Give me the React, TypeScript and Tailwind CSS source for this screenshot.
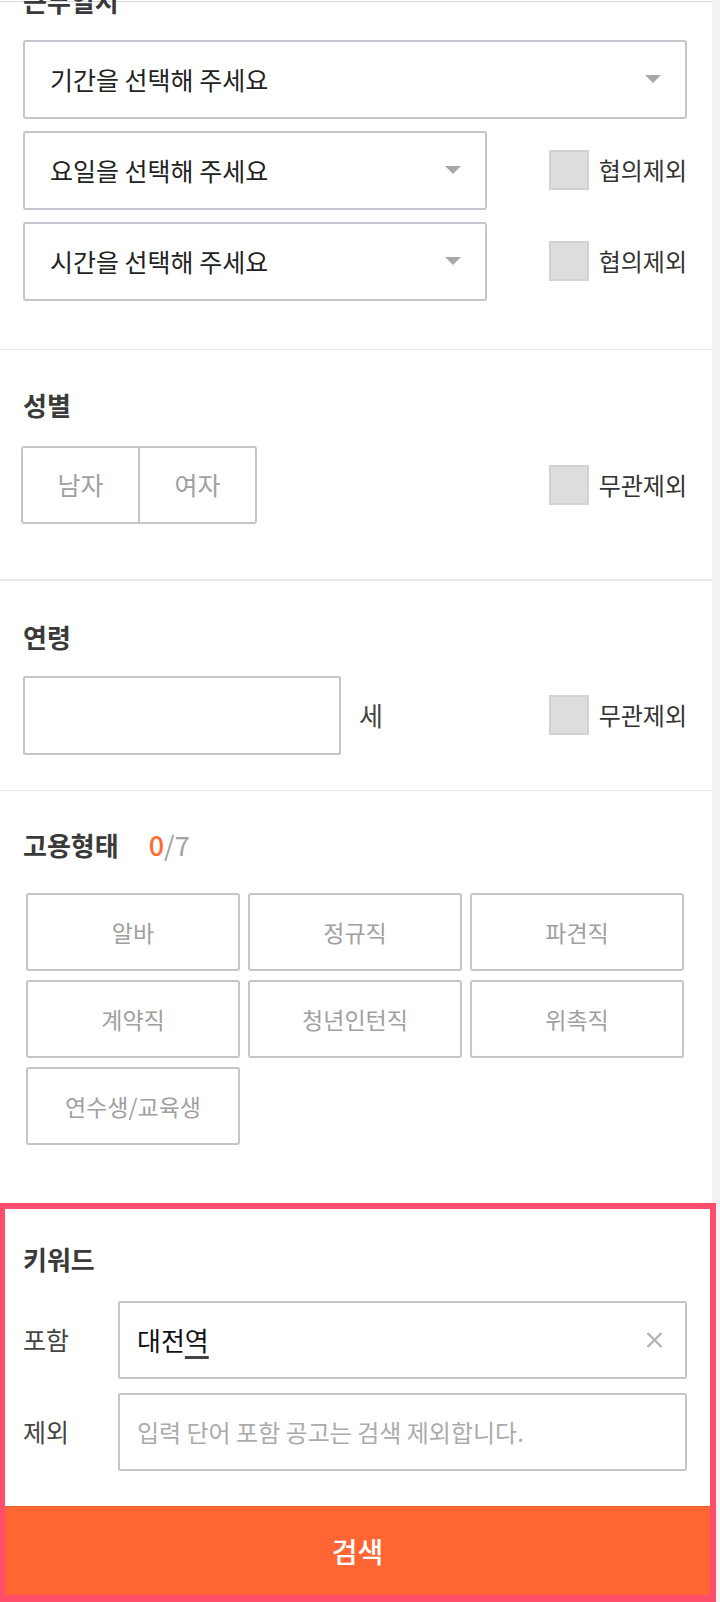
const font = "font-['Noto_Sans_CJK_KR','Noto_Sans',sans-serif]";

function Arrow() {
  return (
    <svg width="16" height="8" viewBox="0 0 16 8" className="shrink-0">
      <path d="M0 0 H16 L8 8 Z" fill="#a4a7ac" />
    </svg>
  );
}

function Select({ label, wide }: { label: string; wide?: boolean }) {
  return (
    <div
      className={`flex h-[79px] items-center justify-between rounded-[3px] border-2 border-[#c3c7cd] pl-[25px] pr-[24px] ${
        wide ? "w-full" : "w-[464px]"
      }`}
    >
      <span className="text-[25px] leading-none text-[#222]">{label}</span>
      <Arrow />
    </div>
  );
}

function Check({ label }: { label: string }) {
  return (
    <div className="flex items-center gap-[10px]">
      <span className="h-[40px] w-[40px] border-2 border-[#cfd3d7] bg-[#dddddd]" />
      <span className="text-[24px] leading-none text-[#333]">{label}</span>
    </div>
  );
}

function Title({ children }: { children: React.ReactNode }) {
  return <h2 className="text-[26px] font-bold leading-[25px] text-[#3a3a3a]">{children}</h2>;
}

const Divider = () => <div className="h-[2px] bg-[#e8e8eb]" />;

const jobTypes = ["알바", "정규직", "파견직", "계약직", "청년인턴직", "위촉직", "연수생/교육생"];

export default function App() {
  return (
    <div className={`flex h-[1602px] w-[720px] overflow-hidden bg-white ${font}`}>
      <div className="flex w-[712px] shrink-0 flex-col">
        <div className="mt-px h-px bg-[#d9d9dc]" />

        {/* 근무일시 */}
        <section className="pb-[48px] pl-[23px] pr-[25px]">
          <div className="-mt-[14px]">
            <Title>근무일시</Title>
          </div>
          <div className="mt-[27px] flex flex-col gap-[12px]">
            <Select label="기간을 선택해 주세요" wide />
            <div className="flex items-center justify-between">
              <Select label="요일을 선택해 주세요" />
              <Check label="협의제외" />
            </div>
            <div className="flex items-center justify-between">
              <Select label="시간을 선택해 주세요" />
              <Check label="협의제외" />
            </div>
          </div>
        </section>
        <Divider />

        {/* 성별 */}
        <section className="pb-[55px] pl-[23px] pr-[25px] pt-[42px]">
          <Title>성별</Title>
          <div className="mt-[29px] flex items-center justify-between">
            <div className="-ml-[2px] flex h-[78px] w-[236px] rounded-[3px] border-2 border-[#c3c5ca]">
              <button className="flex flex-1 items-center justify-center border-r-2 border-[#c3c5ca] text-[25px] text-[#a0a0a0]">
                남자
              </button>
              <button className="flex flex-1 items-center justify-center text-[25px] text-[#a0a0a0]">
                여자
              </button>
            </div>
            <Check label="무관제외" />
          </div>
        </section>
        <Divider />

        {/* 연령 */}
        <section className="pb-[35px] pl-[23px] pr-[25px] pt-[43px]">
          <Title>연령</Title>
          <div className="mt-[27px] flex items-center">
            <div className="h-[79px] w-[318px] rounded-[2px] border-2 border-[#c3c5ca]" />
            <span className="ml-[18px] text-[26px] leading-none text-[#444]">세</span>
            <div className="ml-auto">
              <Check label="무관제외" />
            </div>
          </div>
        </section>
        <Divider />

        {/* 고용형태 */}
        <section className="pb-[58px] pl-[23px] pr-[25px] pt-[40px]">
          <div className="flex items-center">
            <Title>고용형태</Title>
            <span className="ml-[30px] text-[27px] leading-none">
              <span className="font-medium text-[#ff6a33]">0</span>
              <span className="text-[#a0a0a0]">/7</span>
            </span>
          </div>
          <div className="ml-[3px] mt-[35px] grid w-[658px] grid-cols-3 gap-x-[8px] gap-y-[9px]">
            {jobTypes.map((t) => (
              <button
                key={t}
                className="flex h-[78px] items-center justify-center rounded-[3px] border-2 border-[#c3c5ca] text-[23px] text-[#a0a0a0]"
              >
                {t}
              </button>
            ))}
          </div>
        </section>

        {/* 키워드 */}
        <section className="relative z-10 flex w-[716px] flex-col border-[6px] border-b-[7px] border-l-[5px] border-[#ff4d6b] bg-white">
          <div className="pb-[35px] pl-[18px] pr-[23px] pt-[37px]">
            <Title>키워드</Title>
            <div className="mt-[30px] flex flex-col gap-[14px]">
              <div className="flex items-center">
                <span className="w-[95px] text-[25px] leading-none text-[#444]">포함</span>
                <div className="flex h-[78px] flex-1 items-center justify-between rounded-[2px] border-2 border-[#c3c5ca] pl-[17px] pr-[22px]">
                  <span className="text-[26px] leading-none text-[#111]">
                    대전
                    <span className="underline decoration-[#444] decoration-[3px] underline-offset-[5px]">역</span>
                  </span>
                  <svg width="17" height="16" viewBox="0 0 17 16">
                    <path d="M1.5 1 L15.5 15 M15.5 1 L1.5 15" stroke="#b4b4b4" strokeWidth="2.4" />
                  </svg>
                </div>
              </div>
              <div className="flex items-center">
                <span className="w-[95px] text-[25px] leading-none text-[#444]">제외</span>
                <input
                  className="h-[78px] flex-1 rounded-[2px] border-2 border-[#c3c5ca] pl-[17px] text-[24px] text-[#222] outline-none placeholder:text-[#ababab]"
                  placeholder="입력 단어 포함 공고는 검색 제외합니다."
                />
              </div>
            </div>
          </div>
          <button className="h-[89px] border-t border-[#ea5e2c] bg-[#ff6633] text-[28px] font-medium text-white">
            검색
          </button>
        </section>
      </div>
      <div className="w-[8px] shrink-0 bg-[#f2f2f2]" />
    </div>
  );
}
